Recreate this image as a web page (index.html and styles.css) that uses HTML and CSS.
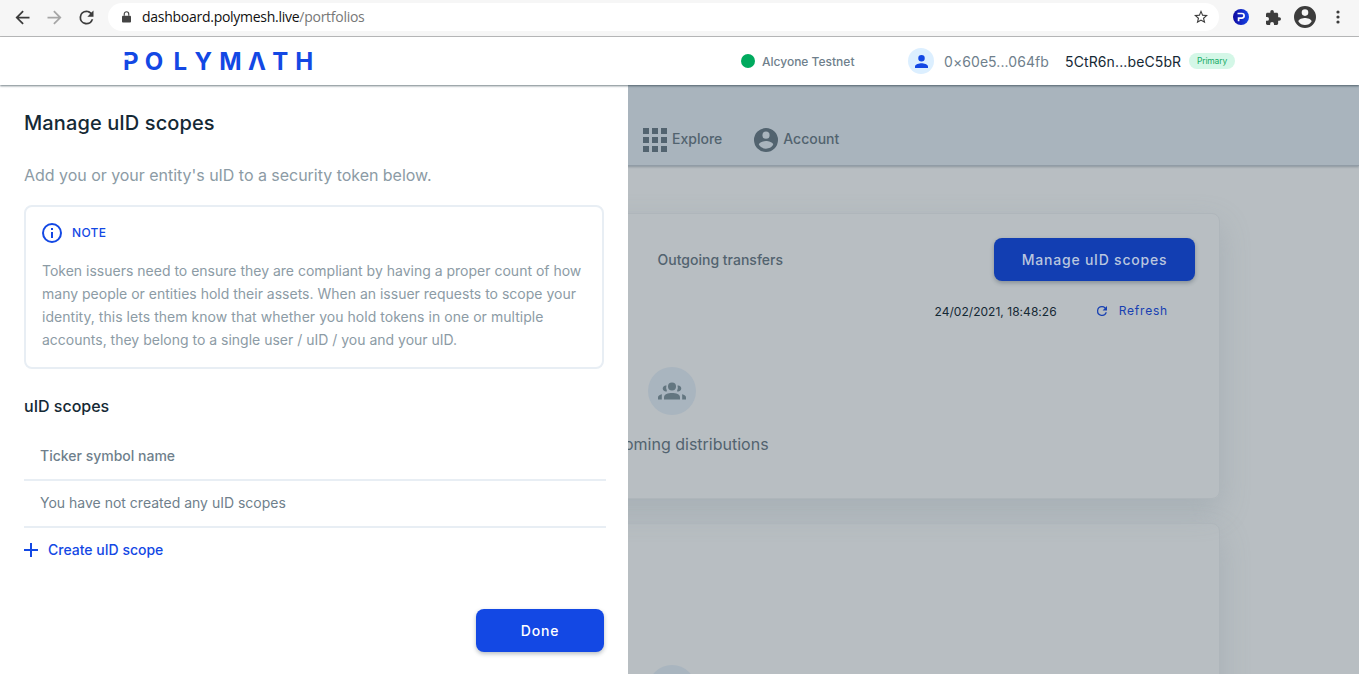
FILE: index.html
```html
<!DOCTYPE html>
<html lang="en">
<head>
<meta charset="utf-8">
<title>Portfolios</title>
<link rel="stylesheet" href="styles.css">
</head>
<body>
<div class="browser">
  <svg class="nav-icon" viewBox="0 0 24 24"><path d="M20 11H7.83l5.59-5.59L12 4l-8 8 8 8 1.41-1.41L7.83 13H20z"/></svg>
  <svg class="nav-icon faded" viewBox="0 0 24 24"><path d="M4 11h12.17l-5.59-5.59L12 4l8 8-8 8-1.41-1.41L16.17 13H4z"/></svg>
  <svg class="nav-icon" viewBox="0 0 24 24"><path d="M17.65 6.35A7.96 7.96 0 0 0 12 4a8 8 0 1 0 7.73 10h-2.08A6 6 0 1 1 12 6c1.66 0 3.14.69 4.22 1.78L13 11h7V4z"/></svg>
  <div class="address">
    <svg class="lock" viewBox="0 0 10 13"><path d="M1 5h8q1 0 1 1v5.500q0 1-1 1H1q-1 0-1-1V6q0-1 1-1z"/><path d="M2.500 5V3.200a2.500 2.500 0 0 1 5 0V5" fill="none" stroke="#444" stroke-width="1.300"/></svg>
    <div class="url">dashboard.polymesh.live<span>/portfolios</span></div>
    <svg class="star" viewBox="2 2 20 20"><path d="m22 9.240-7.190-.62L12 2 9.190 8.630 2 9.240l5.460 4.730L5.820 21 12 17.270 18.180 21l-1.630-7.030zM12 15.400l-3.760 2.270 1-4.280-3.320-2.880 4.380-.38L12 6.100l1.710 4.040 4.380.38-3.320 2.880 1 4.280z"/></svg>
  </div>
  <svg class="ext-logo" viewBox="0 0 16 16"><defs><linearGradient id="g"><stop stop-color="#1009a0"/><stop offset="1" stop-color="#1647e8"/></linearGradient></defs><circle cx="8" cy="8" r="8" fill="url(#g)"/><path d="M4.500 4.500h4.300a2.200 2.200 0 0 1 0 4.600H5.600v3.200" fill="none" stroke="#fff" stroke-width="1.700"/></svg>
  <svg class="puzzle" viewBox="2 1 21 21"><path d="M20.500 11H19V7c0-1.100-.9-2-2-2h-4V3.500a2.500 2.500 0 0 0-5 0V5H4c-1.100 0-1.990.9-1.990 2v3.800H3.500a2.700 2.700 0 0 1 0 5.400H2V20c0 1.100.9 2 2 2h3.800v-1.500a2.700 2.700 0 0 1 5.400 0V22H17c1.100 0 2-.9 2-2v-4h1.500a2.500 2.500 0 0 0 0-5z"/></svg>
  <svg class="profile" viewBox="2 2 20 20"><path d="M12 2a10 10 0 1 0 0 20 10 10 0 0 0 0-20zm0 3a3 3 0 1 1 0 6 3 3 0 0 1 0-6zm0 14.200a7.200 7.200 0 0 1-6-3.220c.03-1.990 4-3.080 6-3.080s5.970 1.090 6 3.080a7.200 7.200 0 0 1-6 3.220z"/></svg>
  <svg class="dots" viewBox="0 0 4 14"><circle cx="2" cy="2" r="1.600"/><circle cx="2" cy="7" r="1.600"/><circle cx="2" cy="12" r="1.600"/></svg>
</div>

<header class="header">
  <svg class="wordmark" viewBox="0 0 190 20"><text y="18.700" x="-1 20.800 49.500 70.400 95.300 124 148.300 171.200">POLYMΛTH</text><path d="M0 4.500h4.800v4.300H0z" fill="#fff"/></svg>
  <div class="network"><i></i>Alcyone Testnet</div>
  <div class="avatar"><svg viewBox="4 4 16 16"><path d="M12 12a4 4 0 1 0 0-8 4 4 0 0 0 0 8zm0 2c-2.670 0-8 1.340-8 4v2h16v-2c0-2.660-5.330-4-8-4z"/></svg></div>
  <div class="did">0×60e5...064fb</div>
  <div class="key">5CtR6n...beC5bR</div>
  <div class="badge">Primary</div>
</header>

<main class="page">
  <nav class="tabs">
    <a><svg viewBox="0 0 24 24"><path d="M0 0h6v6H0zM9 0h6v6H9zM18 0h6v6h-6zM0 9h6v6H0zM9 9h6v6H9zM18 9h6v6h-6zM0 18h6v6H0zM9 18h6v6H9zM18 18h6v6h-6z"/></svg>Explore</a>
    <a><svg viewBox="2 2 20 20"><path d="M12 2a10 10 0 1 0 0 20 10 10 0 0 0 0-20zm0 3a3 3 0 1 1 0 6 3 3 0 0 1 0-6zm0 14.200a7.200 7.200 0 0 1-6-3.220c.03-1.990 4-3.080 6-3.080s5.970 1.090 6 3.080a7.200 7.200 0 0 1-6 3.220z"/></svg>Account</a>
  </nav>
  <section class="cards">
    <div class="card first">
      <div class="card-top"><span>Outgoing transfers</span><button class="button manage">Manage uID scopes</button></div>
      <div class="card-meta"><time>24/02/2021, 18:48:26</time><a><svg viewBox="4 4 16 16"><path d="M17.650 6.350A7.960 7.960 0 0 0 12 4a8 8 0 1 0 7.730 10h-2.080A6 6 0 1 1 12 6c1.660 0 3.140.69 4.220 1.780L13 11h7V4z"/></svg><span>Refresh</span></a></div>
      <div class="empty-icon"><svg viewBox="0 0 28 18"><circle cx="14" cy="4.500" r="4"/><path d="M6 17.500v-2.200c0-3 4-4.300 8-4.300s8 1.300 8 4.300v2.200z"/><path d="M8.500 3.600A3 3 0 1 0 9 9.200a6.500 6.500 0 0 1-.5-5.600zM19.500 3.600A3 3 0 1 1 19 9.200a6.500 6.500 0 0 0 .5-5.600zM4 12.300c-2.500.5-4 1.600-4 3.200v2h3.800v-2.300c0-1.200 0-2 .2-2.900zM24 12.300c2.500.5 4 1.600 4 3.200v2h-3.800v-2.300c0-1.200 0-2-.2-2.900z"/></svg></div>
      <p class="empty-text">No upcoming distributions</p>
    </div>
    <div class="card second"><div class="empty-icon"></div></div>
  </section>

  <aside class="drawer">
    <h1>Manage uID scopes</h1>
    <p class="lead">Add you or your entity's uID to a security token below.</p>
    <div class="note">
      <div class="note-title"><svg viewBox="2 2 20 20"><path d="M11 7h2v2h-2zm0 4h2v6h-2zm1-9a10 10 0 1 0 0 20 10 10 0 0 0 0-20zm0 18a8 8 0 1 1 0-16 8 8 0 0 1 0 16z"/></svg><span>NOTE</span></div>
      <p>Token issuers need to ensure they are compliant by having a proper count of how<br>many people or entities hold their assets. When an issuer requests to scope your<br><span class="loose">identity, this lets them know that whether you hold tokens in one or multiple</span><br>accounts, they belong to a single user / uID / you and your uID.</p>
    </div>
    <h2>uID scopes</h2>
    <div class="row heading">Ticker symbol name</div>
    <div class="row">You have not created any uID scopes</div>
    <a class="create"><svg viewBox="0 0 14 14"><path d="M6 0h2v6h6v2H8v6H6V8H0V6h6z"/></svg>Create uID scope</a>
    <button class="button done">Done</button>
  </aside>
</main>
</body>
</html>
```
FILE: styles.css
```css
* { box-sizing: border-box; }
body {
  margin: 0; width: 1359px; height: 674px; overflow: hidden;
  display: flex; flex-direction: column;
  font-family: Inter, "Liberation Sans", sans-serif; font-size: 14px; color: #152935;
  background: #fff;
}
h1, h2, p { margin: 0; font-weight: 400; }
svg { display: block; flex: none; overflow: visible; }

.browser {
  height: 37px; flex: none; background: #f6f6f6; border-bottom: 1px solid #bdbdbd;
  display: flex; align-items: center; padding: 0 18px 2px 12px; fill: #3c3c3c;
}
.nav-icon { width: 21px; height: 21px; margin-right: 11px; }
.nav-icon.faded { fill: #a6a6a6; }
.address {
  width: 1111px; height: 28px; border-radius: 14px; background: #fff;
  display: flex; align-items: center; padding: 0 11px 0 14px; margin-right: 14px;
}
.lock { width: 9px; height: 12px; fill: #444; margin-right: 11px; }
.url { font-family: "Open Sans", "Noto Sans", sans-serif; font-size: 14px; letter-spacing: -.27px; color: #111; white-space: nowrap; padding-bottom: 2px; }
.url span { color: #777; }
.star { width: 14px; height: 14px; margin-left: auto; }
.ext-logo { width: 16px; height: 16px; margin-right: 17px; }
.puzzle { width: 15px; height: 15px; margin-right: 13px; }
.profile { width: 22px; height: 22px; margin-right: 20px; }
.dots { width: 4px; height: 14px; }

.header {
  height: 48px; flex: none; display: flex; align-items: center; padding-left: 124px;
  background: #fff; position: relative; z-index: 3; white-space: nowrap;
  box-shadow: 0 1px 2px rgba(21, 41, 53, .6);
}
.wordmark { width: 190px; height: 20px; fill: #1348e4; font-weight: 700; font-size: 24px; margin-right: 427px; }
.network { display: flex; align-items: center; gap: 7px; width: 167px; font-size: 12px; font-weight: 500; color: #6f7f8c; }
.network i { width: 14px; height: 14px; border-radius: 50%; background: #00aa5e; }
.avatar { width: 26px; height: 26px; border-radius: 50%; background: #dcefff; display: grid; place-items: center; margin-right: 10px; }
.avatar svg { width: 13px; height: 13px; fill: #1348e4; }
.did { width: 121px; font-size: 14px; color: #6f7f8c; letter-spacing: .07px; }
.key { width: 124px; font-size: 14px; color: #152935; letter-spacing: .12px; }
.badge { width: 46px; height: 16px; border-radius: 8px; background: #d4f7e7; color: #15ab66; font-size: 8.500px; letter-spacing: -.15px; line-height: 16px; text-align: center; }

.page { flex: 1; min-height: 0; position: relative; background: #b8bec2; overflow: hidden; }
.tabs {
  height: 81px; background: #a9b4bd; border-bottom: 1px solid #919ca6; box-shadow: 0 1px 2px rgba(70, 90, 105, .4);
  padding: 43px 0 0 643px; display: flex; gap: 32px; align-items: flex-start;
}
.tabs a { display: flex; align-items: center; gap: 5px; height: 22px; color: #52636f; font-size: 14px; font-weight: 500; line-height: 22px; }
.tabs svg { width: 24px; height: 24px; fill: #52636f; margin-top: 2px; }
.cards { width: 1096px; margin: 47px 0 0 124px; display: flex; flex-direction: column; gap: 24px; }
.card { border: 1px solid #afb6bb; border-radius: 8px; box-shadow: 0 12px 30px rgba(125, 142, 151, .3); display: flex; flex-direction: column; align-items: center; }
.first { height: 286px; padding: 24px; }
.second { height: 286px; padding-top: 141px; }
.card-top { align-self: stretch; display: flex; align-items: center; justify-content: flex-end; gap: 211px; color: #52636f; font-weight: 500; }
.button { border: 0; border-radius: 8px; height: 43px; font: 500 14px Inter, sans-serif; letter-spacing: .78px; box-shadow: 0 2px 4px rgba(21, 41, 53, .3); padding: 0; }
.manage { width: 201px; background: #123eb2; color: #b9c6df; }
.card-meta { align-self: flex-end; display: flex; align-items: center; gap: 40px; padding-right: 27px; margin-top: 21px; height: 18px; font-size: 12px; letter-spacing: .03px; }
.card-meta a { display: flex; align-items: center; gap: 12px; color: #1740b2; letter-spacing: .8px; }
.card-meta a span { padding-bottom: 2px; }
.card-meta svg { width: 10px; height: 10px; fill: #1740b2; }
.empty-icon { width: 48px; height: 48px; flex: none; border-radius: 50%; background: #a9b5bf; display: grid; place-items: center; }
.first .empty-icon { margin-top: 47px; }
.empty-icon svg { width: 28px; height: 18px; fill: #637680; }
.empty-text { margin-top: 19px; padding-right: 6px; font-size: 16px; line-height: 20px; color: #52636f; }

.drawer { position: absolute; left: 0; top: 0; width: 628px; height: 589px; background: #fff; padding: 25px 24px 0; z-index: 2; display: flex; flex-direction: column; }
.drawer h1 { font-size: 20px; font-weight: 500; line-height: 26px; letter-spacing: .1px; }
.lead { font-size: 16px; line-height: 24px; margin-top: 27px; color: #8c9ba5; letter-spacing: -.03px; }
.note { height: 164px; border: 2px solid #e8eef4; border-radius: 8px; margin-top: 18px; padding: 16px 16px 0; }
.note-title { display: flex; align-items: center; gap: 10px; height: 20px; color: #1348e4; font-size: 12px; font-weight: 500; letter-spacing: .3px; }
.note-title span { padding-bottom: 2px; }
.note-title svg { width: 20px; height: 20px; fill: #1348e4; }
.note p { font-size: 14px; line-height: 23px; color: #8c9ba5; margin-top: 16px; white-space: nowrap; }
.loose { letter-spacing: .04px; }
.drawer h2 { font-size: 16px; font-weight: 500; line-height: 24px; margin: 25px 0 14px; }
.row { width: 582px; height: 47px; border-bottom: 2px solid #e8eef4; padding: 0 16px; line-height: 43px; color: #6f7f8c; }
.row.heading { height: 49px; line-height: 47px; font-weight: 500; }
.create { display: flex; align-items: center; gap: 10px; margin-top: 11px; height: 20px; color: #1348e4; font-weight: 500; }
.create svg { width: 14px; height: 14px; fill: #1348e4; margin-top: 2px; }
.done { width: 128px; background: #1348e4; color: #fff; align-self: flex-end; margin-top: 50px; }
```
